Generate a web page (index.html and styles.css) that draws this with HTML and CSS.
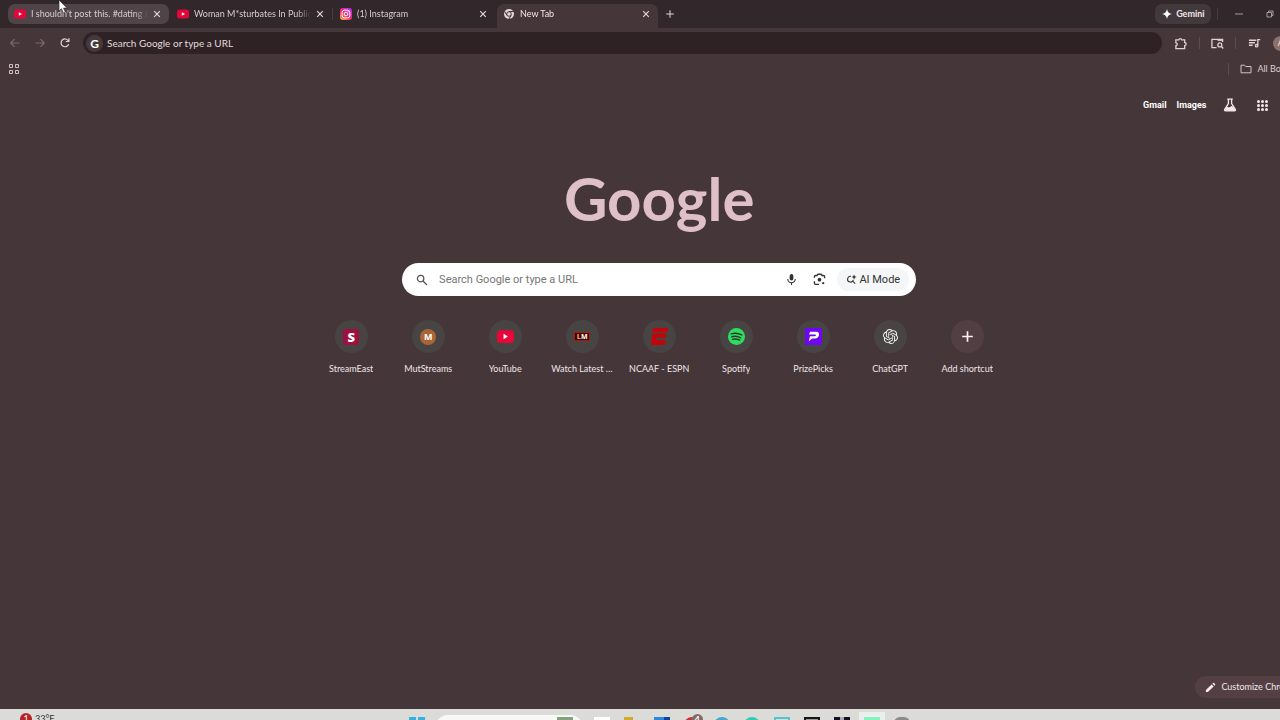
FILE: index.html
```html
<!DOCTYPE html>
<html lang="en">
<head>
    <meta charset="UTF-8">
    <meta name="viewport" content="width=device-width, initial-scale=1.0">
    <title>New Tab</title>
    <link rel="stylesheet" href="styles.css">
</head>
<body>
    <div class="browser">
        <header class="tab-strip">
            <div class="tab hovered">
                <svg class="favicon" viewBox="0 0 12 12"><rect x="0" y="1.5" width="12" height="9" rx="2.5" fill="#e3063a"/><path d="M4.8 4.2v3.6L8 6z" fill="#fff"/></svg>
                <span class="tab-title">I shouldn't post this. #dating #podcast</span>
                <button class="close" aria-label="Close tab"><svg viewBox="0 0 8 8"><path d="M1.2 1.2l5.6 5.6M6.8 1.2L1.2 6.8"/></svg></button>
            </div>
            <div class="tab divided">
                <svg class="favicon" viewBox="0 0 12 12"><rect x="0" y="1.5" width="12" height="9" rx="2.5" fill="#e3063a"/><path d="M4.8 4.2v3.6L8 6z" fill="#fff"/></svg>
                <span class="tab-title">Woman M*sturbates In Public And</span>
                <button class="close" aria-label="Close tab"><svg viewBox="0 0 8 8"><path d="M1.2 1.2l5.6 5.6M6.8 1.2L1.2 6.8"/></svg></button>
            </div>
            <div class="tab">
                <svg class="favicon" viewBox="0 0 12 12">
                    <defs><linearGradient id="insta" x1="0" y1="1" x2=".8" y2="0"><stop offset="0" stop-color="#ffc83d"/><stop offset=".45" stop-color="#ff2f6a"/><stop offset="1" stop-color="#b52af0"/></linearGradient></defs>
                    <rect width="12" height="12" rx="3" fill="url(#insta)"/>
                    <rect x="2.2" y="2.2" width="7.6" height="7.6" rx="2.2" fill="none" stroke="#fff"/>
                    <circle cx="6" cy="6" r="1.8" fill="none" stroke="#fff"/><circle cx="8.2" cy="3.8" r=".5" fill="#fff"/>
                </svg>
                <span class="tab-title">(1) Instagram</span>
                <button class="close" aria-label="Close tab"><svg viewBox="0 0 8 8"><path d="M1.2 1.2l5.6 5.6M6.8 1.2L1.2 6.8"/></svg></button>
            </div>
            <div class="tab active">
                <svg class="favicon" viewBox="0 0 12 12">
                    <circle cx="6" cy="6" r="5" fill="#e2d6d8"/>
                    <circle cx="6" cy="6" r="2.3" fill="#e2d6d8" stroke="#453639"/>
                    <path d="M6 3.5h4.7M3.9 7.3L1.5 3.3M8.1 7.3l-2.3 4" stroke="#453639" fill="none"/>
                </svg>
                <span class="tab-title">New Tab</span>
                <button class="close" aria-label="Close tab"><svg viewBox="0 0 8 8"><path d="M1.2 1.2l5.6 5.6M6.8 1.2L1.2 6.8"/></svg></button>
            </div>
            <button class="new-tab" aria-label="New tab"><svg viewBox="0 0 10 10"><path d="M5 1.2v7.6M1.2 5h7.6"/></svg></button>
            <button class="gemini"><svg viewBox="0 0 10 10"><path d="M5 0Q5.7 4.3 10 5Q5.7 5.7 5 10Q4.3 5.7 0 5Q4.3 4.3 5 0z"/></svg>Gemini</button>
            <div class="window-buttons">
                <button aria-label="Minimize"><svg viewBox="0 0 8 8"><path d="M0 4h8"/></svg></button>
                <button aria-label="Restore"><svg viewBox="0 0 8 8"><path d="M1 2.5h4.5V7H1zM2.5 2.5V1H7v4.5H5.5"/></svg></button>
                <button aria-label="Close"><svg viewBox="0 0 8 8"><path d="M1 1l6 6M7 1L1 7"/></svg></button>
            </div>
        </header>

        <nav class="toolbar">
            <div class="nav-buttons">
                <button class="disabled" aria-label="Back"><svg viewBox="0 0 12 12"><path d="M10.5 6H2M5.5 2.2L1.8 6l3.7 3.8"/></svg></button>
                <button class="disabled" aria-label="Forward"><svg viewBox="0 0 12 12"><path d="M1.5 6H10M6.5 2.2L10.2 6 6.5 9.8"/></svg></button>
                <button aria-label="Reload"><svg viewBox="0 0 12 12"><path d="M9.6 7.3A3.9 3.9 0 1 1 9.3 3.8M9.9 1.3v3.2H6.7"/></svg></button>
            </div>
            <div class="omnibox">
                <span class="g-badge" aria-hidden="true">G</span>
                <input type="text" aria-label="Address bar" placeholder="Search Google or type a URL">
            </div>
            <div class="toolbar-icons">
                <button aria-label="Extensions"><svg viewBox="0 0 14 14"><path d="M2 3h3.2a1.6 1.6 0 0 1 3.1 0H11.5v3a1.6 1.6 0 0 1 0 3.2v3.3H2V9.3a1.5 1.5 0 0 0 0-3z"/></svg></button>
                <button class="bordered" aria-label="Search this page"><svg viewBox="0 0 14 14"><path d="M6 11.5H1v-9h11.5v3"/><path d="M7 3.5h5.5"/><circle cx="9.5" cy="8.5" r="2.1"/><path d="M11 10l2.2 2.4"/></svg></button>
                <button aria-label="Media controls"><svg viewBox="0 0 14 14"><path d="M1 3.5h8M1 6.2h6.5M1 8.9h4M10.6 9V2.8h2.6"/><circle cx="9.3" cy="9.4" r="1.3"/></svg></button>
                <button class="avatar" aria-label="Profile">A</button>
                <button class="menu" aria-label="Menu"><svg viewBox="0 0 14 14"><path d="M7 2.5v1M7 6.5v1M7 10.5v1"/></svg></button>
            </div>
        </nav>

        <div class="bookmarks">
            <button class="apps-button" aria-label="Apps"><svg viewBox="0 0 12 12"><path d="M1.5 1.5h3v3h-3zM7.5 1.5h3v3h-3zM1.5 7.5h3v3h-3zM7.5 7.5h3v3h-3z"/></svg></button>
            <button class="all-bookmarks"><svg viewBox="0 0 12 12"><path d="M1 2.2h3.5l1.2 1.3H11v6.3H1z"/></svg>All Bookmarks</button>
        </div>

        <main class="page">
            <div class="page-links">
                <a href="#gmail">Gmail</a>
                <a href="#images">Images</a>
                <a href="#labs" class="labs" aria-label="Search Labs"><svg viewBox="0 0 14 14"><path d="M4.2 1.2h5.6M5.4 1.5v4L1.7 11.3q-.7 1.5.9 1.5h8.8q1.6 0 .9-1.5L8.6 5.5v-4" fill="none" stroke="#f5e9eb" stroke-width="1.3"/><path d="M3.5 8.5l2.5.9 2.7-1.3 1.5.6 2.3 4H1.8z" fill="#f5e9eb"/></svg></a>
                <a href="#apps" class="apps" aria-label="Google apps"><i></i><i></i><i></i><i></i><i></i><i></i><i></i><i></i><i></i></a>
            </div>

            <h1 class="logo">Google</h1>

            <form class="search">
                <svg class="search-icon" viewBox="0 0 12 12"><circle cx="4.6" cy="4.6" r="3.2"/><path d="M7 7l4 4"/></svg>
                <input type="text" aria-label="Search" placeholder="Search Google or type a URL">
                <button type="button" aria-label="Search by voice"><svg viewBox="0 0 14 14"><rect x="5" y="1" width="4" height="7" rx="2" fill="#333"/><path d="M3 6.5a4 4 0 0 0 8 0M7 10.5V13" fill="none" stroke="#333" stroke-width="1.2"/></svg></button>
                <button type="button" aria-label="Search by image"><svg viewBox="0 0 14 14"><path d="M1.5 5.2V4q0-1.3 1.3-1.3h1.5L5.3 1.4h3.4l1 1.3h1.5q1.3 0 1.3 1.3v1.7M1.5 8.8v2q0 1.5 1.5 1.5h3.5" fill="none" stroke="#333" stroke-width="1.5"/><circle cx="7" cy="7.2" r="2" fill="#333"/><circle cx="11" cy="11" r="1.2" fill="#333"/></svg></button>
                <button type="button" class="ai-mode"><svg viewBox="0 0 12 12"><path d="M5.5 2.5A3.2 3.2 0 1 0 8 6.5M7 7.5l3 3" fill="none" stroke="#333" stroke-width="1.2"/><path d="M8.8.5q.4 2.5 2.7 2.9Q9.2 3.8 8.8 6.3 8.4 3.8 6.1 3.4 8.4 3 8.8.5z" fill="#333"/></svg>AI Mode</button>
            </form>

            <div class="shortcuts">
                <a class="shortcut" href="#streameast">
                    <span class="tile"><span class="icon streameast">S</span></span>
                    <span class="label">StreamEast</span>
                </a>
                <a class="shortcut" href="#mutstreams">
                    <span class="tile"><span class="icon mutstreams">M</span></span>
                    <span class="label">MutStreams</span>
                </a>
                <a class="shortcut" href="#youtube">
                    <span class="tile"><svg viewBox="0 0 16 16"><rect y="2" width="16" height="12" rx="3" fill="#e8053a"/><path d="M6.2 5.5v5l4-2.5z" fill="#fff"/></svg></span>
                    <span class="label">YouTube</span>
                </a>
                <a class="shortcut" href="#watch">
                    <span class="tile"><span class="icon watch"><b>L</b>M</span></span>
                    <span class="label">Watch Latest Movies</span>
                </a>
                <a class="shortcut" href="#espn">
                    <span class="tile"><svg viewBox="0 0 16 16"><path d="M1.9 0H16l-.6 3.8H1.3zM1.2 4.9h13.4l-.7 4.3H5.2l-.3 2h8.8l-.7 4.8H0z" fill="#c20509"/></svg></span>
                    <span class="label">NCAAF - ESPN</span>
                </a>
                <a class="shortcut" href="#spotify">
                    <span class="tile"><svg viewBox="0 0 16 16"><circle cx="8" cy="8" r="8" fill="#2fdc62"/><path d="M3 5.5q5.2-1.5 10 1M3.6 8.2q4.4-1.2 8.4 1M4.2 10.7q3.6-.9 6.8.8" fill="none" stroke="#26382b" stroke-width="1.3" stroke-linecap="round"/></svg></span>
                    <span class="label">Spotify</span>
                </a>
                <a class="shortcut" href="#prizepicks">
                    <span class="tile"><svg viewBox="0 0 18 18"><rect width="18" height="18" rx="1" fill="#6f05f2"/><path d="M5.4 4h6.8q3.2.3 2.6 3.6-.7 3.3-4 3.4H7.6l-3.6 3 1.3-5.2h4.9q1.2-.1 1.4-1.1.1-.9-.9-.9H4.2z" fill="#fff"/></svg></span>
                    <span class="label">PrizePicks</span>
                </a>
                <a class="shortcut" href="#chatgpt">
                    <span class="tile"><svg class="small" viewBox="0 0 24 24" fill="#f3f3f3"><path d="M22.282 9.821a5.985 5.985 0 0 0-.516-4.91 6.046 6.046 0 0 0-6.51-2.9A6.065 6.065 0 0 0 4.981 4.182a5.985 5.985 0 0 0-3.998 2.9 6.046 6.046 0 0 0 .743 7.097 5.98 5.98 0 0 0 .511 4.911 6.051 6.051 0 0 0 6.515 2.9A5.985 5.985 0 0 0 13.26 24a6.056 6.056 0 0 0 5.772-4.206 5.99 5.99 0 0 0 3.998-2.9 6.056 6.056 0 0 0-.748-7.073zM13.26 22.43a4.476 4.476 0 0 1-2.876-1.041l.141-.08 4.779-2.758a.795.795 0 0 0 .393-.681v-6.737l2.02 1.169a.071.071 0 0 1 .038.052v5.583a4.504 4.504 0 0 1-4.495 4.493zM3.6 18.304a4.47 4.47 0 0 1-.535-3.014l.142.085 4.783 2.759a.771.771 0 0 0 .781 0l5.843-3.369v2.332a.08.08 0 0 1-.033.062L9.74 19.95a4.5 4.5 0 0 1-6.14-1.646zM2.341 7.896a4.485 4.485 0 0 1 2.366-1.973V11.6a.766.766 0 0 0 .388.677l5.815 3.354-2.02 1.169a.076.076 0 0 1-.071 0l-4.83-2.786A4.504 4.504 0 0 1 2.341 7.872zm16.597 3.856l-5.833-3.387L15.119 7.2a.076.076 0 0 1 .071 0l4.83 2.791a4.494 4.494 0 0 1-.676 8.105v-5.678a.79.79 0 0 0-.407-.667zm2.01-3.023l-.141-.085-4.774-2.782a.776.776 0 0 0-.785 0L9.409 9.23V6.897a.066.066 0 0 1 .028-.061l4.83-2.787a4.5 4.5 0 0 1 6.68 4.66zm-12.64 4.135l-2.02-1.164a.08.08 0 0 1-.038-.057V6.075a4.5 4.5 0 0 1 7.376-3.453l-.142.08L8.704 5.46a.795.795 0 0 0-.393.681zm1.097-2.365l2.602-1.5 2.607 1.5v2.999l-2.597 1.5-2.607-1.5z"/></svg></span>
                    <span class="label">ChatGPT</span>
                </a>
                <button class="shortcut add" type="button">
                    <span class="tile"><svg viewBox="0 0 16 16"><path d="M8 3v10M3 8h10" stroke="#fff0f2" stroke-width="1.6"/></svg></span>
                    <span class="label">Add shortcut</span>
                </button>
            </div>

            <button class="customize"><svg viewBox="0 0 12 12"><path d="M1 11V8.8L7.2 2.6l2.2 2.2L3.2 11zM8 1.8l.8-.8q.5-.4 1 0L11 2.2q.4.5 0 1l-.8.8z" fill="#fbe9ee"/></svg>Customize Chrome</button>
        </main>
    </div>

    <footer class="taskbar">
        <div class="weather"><span class="alert">1</span>33°F</div>
        <div class="task-items">
            <span class="task"><i class="start"></i></span>
            <span class="task-search"><i></i></span>
            <span class="task"><i class="white"></i></span>
            <span class="task"><i class="folder"></i></span>
            <span class="task"><i class="blue"></i></span>
            <span class="task"><i class="red"></i><b class="count">4</b></span>
            <span class="task"><i class="sky"></i></span>
            <span class="task"><i class="teal"></i></span>
            <span class="task"><i class="aqua"></i></span>
            <span class="task"><i class="black"></i></span>
            <span class="task"><i class="night"></i></span>
            <span class="task current"><i class="mint"></i></span>
            <span class="task"><i class="gray"></i></span>
        </div>
    </footer>

    <svg class="cursor" viewBox="0 0 10 14"><path d="M1 0v11l2.5-2.3L5.3 13l2-.9-1.8-4H9z" fill="#fff" stroke="#222" stroke-width=".6"/></svg>
</body>
</html>
```

FILE: styles.css
```css
* {
    box-sizing: border-box;
}

body {
    font-family: Lato, 'Open Sans', sans-serif;
    font-size: 9px;
    line-height: 12px;
    background-color: #453639;
    color: #f2e6e8;
    margin: 0;
    height: 100vh;
    display: flex;
    flex-direction: column;
    overflow: hidden;
}

button, input {
    font: inherit;
    color: inherit;
    background: none;
    border: none;
    padding: 0;
    margin: 0;
    outline: none;
}

button {
    display: flex;
    align-items: center;
    justify-content: center;
}

a {
    color: inherit;
    text-decoration: none;
}

svg {
    flex: none;
}

/* The window is a little wider than the viewport */
.browser {
    width: 103%;
    flex: 1;
    display: flex;
    flex-direction: column;
}

/* Tabs */
.tab-strip {
    display: flex;
    align-items: flex-start;
    height: 28px;
    padding: 4px 0 0 8px;
    background-color: #32272a;
}

.tab {
    position: relative;
    display: flex;
    align-items: center;
    gap: 5px;
    width: 161px;
    height: 20px;
    padding: 0 8px 0 6px;
    margin-right: 2px;
    border-radius: 7px;
    color: #d9cccf;
}

.tab.hovered {
    background-color: #514448;
}

.tab.divided::after {
    content: '';
    position: absolute;
    right: -1px;
    top: 4px;
    height: 12px;
    border-right: 1px solid #493b3e;
}

.tab.active {
    height: 24px;
    padding-bottom: 4px;
    background-color: #453639;
    border-radius: 7px 7px 0 0;
    color: #f2e6e8;
}

.favicon {
    width: 12px;
    height: 12px;
}

.tab-title {
    flex: 1;
    white-space: nowrap;
    overflow: hidden;
    -webkit-mask-image: linear-gradient(to right, #000 88%, transparent);
    mask-image: linear-gradient(to right, #000 88%, transparent);
}

.close svg {
    width: 8px;
    height: 8px;
    stroke: #e2d6d8;
    stroke-width: 1.2;
}

.new-tab {
    width: 20px;
    height: 20px;
}

.new-tab svg {
    width: 10px;
    height: 10px;
    stroke: #e2d6d8;
}

.gemini {
    gap: 4px;
    height: 20px;
    width: 56px;
    margin-left: auto;
    border-radius: 7px;
    background-color: #41393b;
    font-weight: 700;
}

.gemini svg {
    width: 10px;
    height: 10px;
    fill: #fff;
}

.window-buttons {
    display: flex;
    margin: 4px 0 0 6px;
    border-left: 1px solid #493b3e;
}

.window-buttons button {
    width: 32px;
    height: 12px;
}

.window-buttons button:first-child {
    width: 36px;
    padding-left: 6px;
}

.window-buttons svg {
    width: 8px;
    height: 8px;
    fill: none;
    stroke: #a89a9d;
    stroke-width: 1;
}

/* Address bar */
.toolbar {
    display: flex;
    align-items: center;
    height: 30px;
    padding-left: 2px;
}

.nav-buttons {
    display: flex;
    width: 81px;
}

.nav-buttons button {
    width: 25px;
}

.nav-buttons svg {
    width: 12px;
    height: 12px;
    fill: none;
    stroke: #e2d6d8;
    stroke-width: 1.2;
}

.nav-buttons .disabled svg {
    stroke: #7d6b6f;
}

.omnibox {
    flex: 1;
    display: flex;
    align-items: center;
    gap: 4px;
    height: 22px;
    padding-left: 3px;
    border-radius: 11px;
    background-color: #2f2225;
}

.omnibox input {
    flex: 1;
    font-size: 10px;
    height: 14px;
}

.omnibox input::placeholder {
    color: #e6dadc;
    opacity: 1;
}

.g-badge {
    width: 17px;
    height: 17px;
    border-radius: 50%;
    background-color: #45393c;
    color: #fff;
    font-weight: 700;
    font-size: 12px;
    line-height: 17px;
    text-align: center;
}

.toolbar-icons {
    display: flex;
    align-items: center;
}

.toolbar-icons button {
    width: 37px;
    height: 14px;
}

.toolbar-icons .bordered {
    border: solid #5d4b4f;
    border-width: 0 1px;
    height: 12px;
}

.toolbar-icons svg {
    width: 13px;
    height: 13px;
    fill: none;
    stroke: #e2d0d4;
    stroke-width: 1.4;
}

.toolbar-icons .avatar {
    width: 15px;
    height: 15px;
    background-color: #8d7069;
    border-radius: 50%;
}

.toolbar-icons .menu {
    width: 30px;
}

/* Bookmarks */
.bookmarks {
    display: flex;
    align-items: center;
    justify-content: space-between;
    height: 26px;
    padding: 0 6px 4px 8px;
    border-bottom: 1px solid #43373a;
}

.bookmarks svg {
    width: 12px;
    height: 12px;
    fill: none;
    stroke: #d2c2c5;
}

.all-bookmarks {
    gap: 5px;
    width: 84px;
    padding-left: 11px;
    border-left: 1px solid #5d4b4f;
    white-space: nowrap;
    justify-content: flex-start;
    color: #dccfd2;
}

/* New tab page */
.page {
    position: relative;
    flex: 1;
    display: flex;
    flex-direction: column;
    align-items: center;
}

.page-links {
    align-self: stretch;
    display: flex;
    align-items: center;
    justify-content: flex-end;
    gap: 10px;
    height: 42px;
    padding-right: 50px;
    font-family: Roboto, sans-serif;
    font-weight: 700;
    color: #fff;
}

.labs {
    display: flex;
    margin: 0 10px 0 7px;
}

.labs svg {
    width: 14px;
    height: 14px;
}

.apps {
    display: grid;
    grid-template-columns: repeat(3, 3px);
    gap: 1px;
}

.apps i {
    height: 3px;
    border-radius: 50%;
    background-color: #f5e9eb;
}

.logo {
    margin: 32px 0 0;
    font-weight: 700;
    font-size: 60px;
    line-height: 80px;
    color: #dfbfc8;
}

.search {
    display: flex;
    align-items: center;
    width: 39%;
    height: 33px;
    margin: 25px 0 24px;
    padding: 0 7px 0 14px;
    border-radius: 17px;
    background-color: #fff;
    color: #333;
    font-family: Roboto, sans-serif;
}

.search-icon {
    width: 12px;
    height: 12px;
    margin-right: 11px;
    fill: none;
    stroke: #555;
    stroke-width: 1.3;
}

.search input {
    flex: 1;
    min-width: 0;
    height: 16px;
    font-size: 11px;
}

.search input::placeholder {
    color: #757575;
    opacity: 1;
}

.search button {
    width: 28px;
}

.search button svg {
    width: 13px;
    height: 13px;
}

.search .ai-mode {
    width: 72px;
    height: 23px;
    gap: 2px;
    margin-left: 4px;
    border-radius: 12px;
    background-color: #f5f6f8;
    font-size: 11px;
}

.search .ai-mode svg {
    width: 11px;
    height: 11px;
}

.shortcuts {
    display: flex;
}

.shortcut {
    display: flex;
    flex-direction: column;
    align-items: center;
    gap: 10px;
    width: 77px;
}

.tile {
    display: flex;
    align-items: center;
    justify-content: center;
    width: 33px;
    height: 33px;
    border-radius: 50%;
    background-color: #484443;
}

.add .tile {
    background-color: #523f43;
}

.tile svg {
    width: 17px;
    height: 17px;
}

.tile .small {
    width: 15px;
    height: 15px;
}

.icon {
    width: 16px;
    height: 16px;
    text-align: center;
    color: #fff;
    font: 700 11px/16px 'Noto Sans', sans-serif;
}

.streameast {
    background-color: #9b123e;
    border-radius: 2px;
    font-weight: 900;
    font-size: 13px;
}

.mutstreams {
    background-color: #a96535;
    border-radius: 50%;
    font-size: 9px;
}

.watch {
    height: 9px;
    border: 1px solid #a51915;
    background-color: #3a0808;
    font-size: 7px;
    line-height: 7px;
}

.watch b {
    color: #ff9b45;
}

.label {
    max-width: 62px;
    overflow: hidden;
    text-overflow: ellipsis;
    white-space: nowrap;
}

.customize {
    position: absolute;
    right: 16px;
    bottom: 11px;
    justify-content: flex-start;
    gap: 5px;
    width: 107px;
    height: 22px;
    padding-left: 10px;
    border-radius: 11px;
    background-color: #533f44;
    white-space: nowrap;
}

.customize svg {
    width: 11px;
    height: 11px;
}

/* Taskbar, only its top edge is on screen */
.taskbar {
    position: relative;
    flex: none;
    display: flex;
    justify-content: center;
    align-items: flex-start;
    height: 11px;
    overflow: hidden;
    background-color: #dbdbd8;
}

.weather {
    position: absolute;
    left: 20px;
    top: 4px;
    display: flex;
    gap: 3px;
    color: #333;
}

.alert {
    width: 12px;
    height: 12px;
    border-radius: 50%;
    background-color: #b52428;
    color: #fff;
    text-align: center;
}

.task-items {
    display: flex;
    padding-left: 38px;
}

.task {
    position: relative;
    width: 30px;
    height: 32px;
    padding: 8px 7px;
}

.task i {
    display: block;
    height: 16px;
}

.task-search {
    width: 148px;
    height: 26px;
    margin: 6px 4px 0 3px;
    padding: 2px 10px;
    border-radius: 13px;
    background-color: #f8f8f6;
}

.task-search i {
    display: block;
    width: 16px;
    height: 16px;
    margin-left: auto;
    background-color: #83a27d;
}

.start {
    background: linear-gradient(to right, #3aaede 46%, #dbdbd8 46%, #dbdbd8 54%, #3aaede 54%);
}

.white {
    background-color: #fff;
}

.folder {
    width: 9px;
    background-color: #d3aa2d;
}

.blue {
    background: linear-gradient(to right, #2e87d8 60%, #0c459b 60%);
}

.red {
    border-radius: 8px;
    background-color: #c23436;
}

.count {
    position: absolute;
    left: 15px;
    top: 5px;
    width: 11px;
    height: 11px;
    border-radius: 50%;
    background-color: #806b66;
    color: #fff;
    text-align: center;
}

.sky {
    border-radius: 8px;
    background-color: #48a6cf;
}

.teal {
    border-radius: 8px;
    background-color: #35c9b5;
}

.aqua {
    border: 2px solid #55c5cc;
}

.black {
    border: 2px solid #16161a;
    background-color: #999;
}

.night {
    background: linear-gradient(to right, #10102a 40%, #aaa 40%, #aaa 60%, #10102a 60%);
}

.current {
    background: linear-gradient(#e9efec, #e9efec) no-repeat 2px 3px / 26px 29px;
}

.mint {
    background-color: #85f2c0;
}

.gray {
    border-radius: 6px;
    background-color: #8b8b8b;
}

.cursor {
    position: absolute;
    left: 58px;
    top: 0;
    width: 10px;
    height: 14px;
}
```
